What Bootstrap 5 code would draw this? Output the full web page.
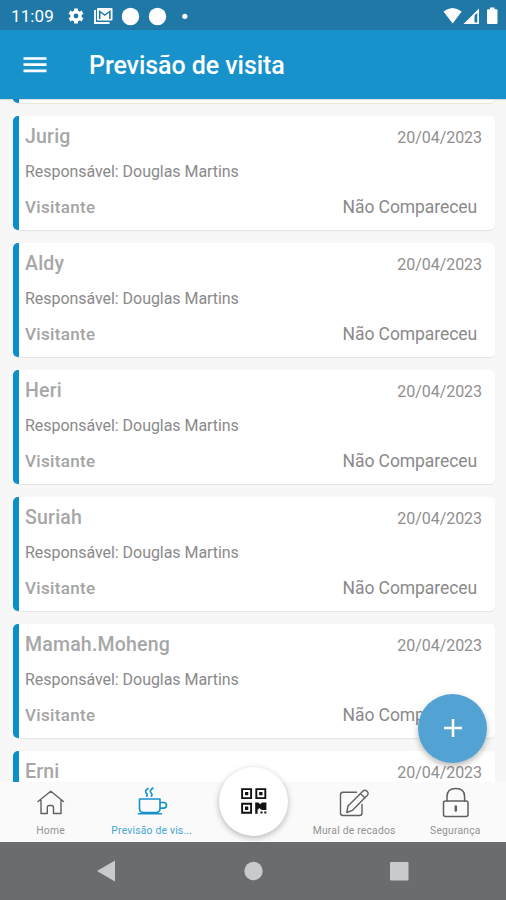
<!DOCTYPE html>
<html lang="pt-BR">
<head>
<meta charset="utf-8">
<meta name="viewport" content="width=device-width, initial-scale=1">
<title>Previsão de visita</title>
<link href="https://cdn.jsdelivr.net/npm/bootstrap@5.3.0/dist/css/bootstrap.min.css" rel="stylesheet">
<style>
body{font-family:Roboto,"Liberation Sans",sans-serif;background:#f7f7f7}
.screen{width:506px;height:900px}
.statusbar{height:30px;background:#1f78a5;color:#fff;padding:2px 8px 0 11px}
.clock{font-size:17px;line-height:28px;letter-spacing:.1px;width:57px}
.appbar{height:69px;background:#1892ca;padding:2px 23px 0;box-shadow:0 1px 1px rgba(0,0,0,.12);z-index:2}
.title{font-size:25px;font-weight:500;line-height:30px;margin:0 0 0 42px;letter-spacing:-.06px}
.menu{margin-bottom:1px}
.visits{background:#f7f7f7;padding:0 11px 0 13px;min-height:0}
.stack{gap:13px;margin-top:-110px}
.visit{height:114px;flex:none;border:0;border-left:6px solid #0a8fcb;border-radius:5px;background:#fff;padding:8px 13px 0 6px;box-shadow:0 1px 1px rgba(0,0,0,.08)}
.who{font-size:19.5px;font-weight:500;line-height:26px;color:#a6a7a8;letter-spacing:.2px}
.when{font-size:16px;line-height:27px;color:#8f8f8f;letter-spacing:-.05px}
.host{font-size:16px;line-height:22px;color:#8a8a8a;margin-top:10px;letter-spacing:-.05px}
.kind{font-size:17px;font-weight:500;line-height:22px;color:#a3a4a5;letter-spacing:.32px}
.state{font-size:17.5px;line-height:22px;color:#8a8a8a;padding-right:5px;letter-spacing:-.08px}
.tabs{height:60px;background:#fafafa;border-bottom:1px solid #fff;z-index:3}
.tab{width:101.2px;padding-top:4px;color:#606060}
.tab.current{color:#1591c9}
.tab svg{height:34px;width:36px}
.tab span{font-size:10.3px;line-height:14px;margin-top:4px;color:#929292;white-space:nowrap;letter-spacing:.22px}
.tab.current span{color:#45a5d3}
.qr{width:69px;height:69px;background:#fff;margin:-15px 0 0 2px;padding-bottom:1px;box-shadow:0 2px 6px rgba(0,0,0,.28)}
.fab{width:69px;height:69px;background:#52a3d3;left:418px;top:693.5px;z-index:4;box-shadow:0 3px 6px rgba(0,0,0,.28)}
.sysnav{height:58px;background:#6a6d70}
</style>
</head>
<body>
<div class="screen d-flex flex-column position-relative overflow-hidden">
  <div class="statusbar d-flex align-items-center flex-shrink-0">
    <span class="clock">11:09</span>
    <svg width="120" height="22" viewBox="68 4 120 22" fill="#fff">
      <circle cx="76" cy="15" r="4.1" fill="none" stroke="#fff" stroke-width="3.4"/>
      <path d="M76 7.5v3M76 19.500v3M69.500 11.200l2.600 1.500M79.900 17.300l2.600 1.500M69.500 18.800l2.600-1.500M79.900 12.700l2.600-1.500" stroke="#fff" stroke-width="3.800"/>
      <path d="M95 9v13h14.500" fill="none" stroke="#fff" stroke-width="1.800"/>
      <path fill-rule="evenodd" d="M98 7h13.500q1 0 1 1v10.500q0 1-1 1H98q-1 0-1-1V8q0-1 1-1zm.900 2v9h1.600v-6.300l4.300 3.200 4.300-3.200V18h1.600V9l-5.900 4.200z"/>
      <circle cx="130.500" cy="15.500" r="8.700"/><circle cx="157.500" cy="15.500" r="8.700"/><circle cx="184.800" cy="15.300" r="2.600"/>
    </svg>
    <svg class="ms-auto" width="56" height="22" viewBox="442 4 56 22" fill="#fff">
      <path d="M443.500 10.500Q452.500 3.500 461.700 10.500L452.700 22.500z"/>
      <path fill-rule="evenodd" d="M463.500 23L479 7.500V23zM474.500 14.500v7h2.800v-9.700z"/>
      <path d="M490 6.500h4.500v1.700h2q1 0 1 1V22q0 1-1 1H488q-1 0-1-1V9.200q0-1 1-1h2z"/>
    </svg>
  </div>
  <header class="appbar d-flex align-items-center text-white flex-shrink-0 position-relative">
    <svg class="menu" width="24" height="18" viewBox="0 0 24 18" stroke="#fff" stroke-width="2.700"><path d="M.5 2.500h23M.5 8.700h23M.5 14.900h23"/></svg>
    <h1 class="title">Previsão de visita</h1>
  </header>

  <main class="visits flex-grow-1 overflow-hidden">
    <div class="stack d-flex flex-column">
      <article class="visit card"></article>
      <article class="visit card"><div class="d-flex justify-content-between"><span class="who">Jurig</span><span class="when">20/04/2023</span></div><div class="host">Responsável: Douglas Martins</div><div class="d-flex justify-content-between mt-auto mb-2 pb-1"><span class="kind">Visitante</span><span class="state">Não Compareceu</span></div></article>
      <article class="visit card"><div class="d-flex justify-content-between"><span class="who">Aldy</span><span class="when">20/04/2023</span></div><div class="host">Responsável: Douglas Martins</div><div class="d-flex justify-content-between mt-auto mb-2 pb-1"><span class="kind">Visitante</span><span class="state">Não Compareceu</span></div></article>
      <article class="visit card"><div class="d-flex justify-content-between"><span class="who">Heri</span><span class="when">20/04/2023</span></div><div class="host">Responsável: Douglas Martins</div><div class="d-flex justify-content-between mt-auto mb-2 pb-1"><span class="kind">Visitante</span><span class="state">Não Compareceu</span></div></article>
      <article class="visit card"><div class="d-flex justify-content-between"><span class="who">Suriah</span><span class="when">20/04/2023</span></div><div class="host">Responsável: Douglas Martins</div><div class="d-flex justify-content-between mt-auto mb-2 pb-1"><span class="kind">Visitante</span><span class="state">Não Compareceu</span></div></article>
      <article class="visit card"><div class="d-flex justify-content-between"><span class="who">Mamah.Moheng</span><span class="when">20/04/2023</span></div><div class="host">Responsável: Douglas Martins</div><div class="d-flex justify-content-between mt-auto mb-2 pb-1"><span class="kind">Visitante</span><span class="state">Não Compareceu</span></div></article>
      <article class="visit card"><div class="d-flex justify-content-between"><span class="who">Erni</span><span class="when">20/04/2023</span></div></article>
    </div>
  </main>

  <button class="fab btn rounded-circle border-0 position-absolute p-0 d-flex align-items-center justify-content-center" aria-label="Adicionar">
    <svg width="18" height="18" viewBox="0 0 18 18" stroke="#fff" stroke-width="2.500"><path d="M9 0v18M0 9h18"/></svg>
  </button>

  <nav class="tabs d-flex flex-shrink-0 position-relative">
    <div class="tab d-flex flex-column align-items-center">
      <svg viewBox="33 786 36 34" fill="none" stroke="currentColor" stroke-width="1.400" stroke-linejoin="round" stroke-linecap="round"><path d="M38 801.500L50.800 791.300 63.500 801.500M41 800v13.500h6.300v-6q0-2 1.800-2h2.600q1.800 0 1.800 2v6h7.500V800"/></svg>
      <span>Home</span>
    </div>
    <div class="tab current d-flex flex-column align-items-center">
      <svg viewBox="134 786 36 34" fill="none" stroke="currentColor" stroke-width="1.600" stroke-linejoin="round" stroke-linecap="round"><path d="M139.500 799h20.500v9.500q0 4-4 4h-12.500q-4 0-4-4zM138.500 813.800h23M160 802.500h3.500q3 0 3 2.800t-3 2.800H160M148 788.500q-3.800 2.500-1.800 4.600t.3 3M153 788q-4 2.700-2 4.800t.2 3.300"/></svg>
      <span>Previsão de vis...</span>
    </div>
    <div class="tab d-flex justify-content-center p-0">
      <div class="qr rounded-circle flex-shrink-0 d-flex align-items-center justify-content-center">
        <svg style="width:26px;height:26px" viewBox="0 0 26 26" fill="#111"><g fill="none" stroke="#111" stroke-width="1.900"><path d="M1.100 1.100h9v9h-9zM15.300 1.100h9v9h-9zM1.100 15.700h9v9h-9z"/></g><path d="M4 4h3.300v3.300H4zM18.200 4h3.300v3.300h-3.300zM4 18.600h3.300v3.300H4zM14.200 14.600h3.200l1.800 1.600 1.800-1.600h4.400v7.300h-4.600l-3-2.200v1.500h-1.200v4.500h-2.400zM19.500 23.500h2v2h-2zM23.300 23.500h2v2h-2z"/></svg>
      </div>
    </div>
    <div class="tab d-flex flex-column align-items-center">
      <svg viewBox="336 786 36 34" fill="none" stroke="currentColor" stroke-width="1.400" stroke-linejoin="round" stroke-linecap="round"><path d="M356.500 792.300H343q-2.500 0-2.500 2.500V813q0 2.500 2.500 2.500h16.500q2.500 0 2.500-2.500v-8.500M346.800 812.500l1.200-6.500 14.800-14.800q2-2 4.200.1t.1 4.200L352.500 810.300zM360.500 793.500l4.500 4.500"/></svg>
      <span>Mural de recados</span>
    </div>
    <div class="tab d-flex flex-column align-items-center">
      <svg viewBox="437 786 36 34" fill="none" stroke="currentColor" stroke-width="1.500" stroke-linejoin="round" stroke-linecap="round"><rect x="443.500" y="801" width="24.500" height="15.500" rx="2"/><path d="M447 801v-4.500q0-8 8.800-8t8.800 8v4.500"/><path d="M455.800 806.500v4" stroke-width="2.500"/></svg>
      <span>Segurança</span>
    </div>
  </nav>
  <div class="sysnav flex-shrink-0">
    <svg class="d-block" width="506" height="58" viewBox="0 842 506 58" fill="#c8cbcc"><path d="M97 871L115 860.500V881.500z"/><circle cx="253.500" cy="871" r="9.200"/><rect x="390" y="862" width="18.500" height="18.500" rx="1"/></svg>
  </div>
</div>
<script src="https://cdn.jsdelivr.net/npm/bootstrap@5.3.0/dist/js/bootstrap.bundle.min.js"></script>
</body>
</html>
